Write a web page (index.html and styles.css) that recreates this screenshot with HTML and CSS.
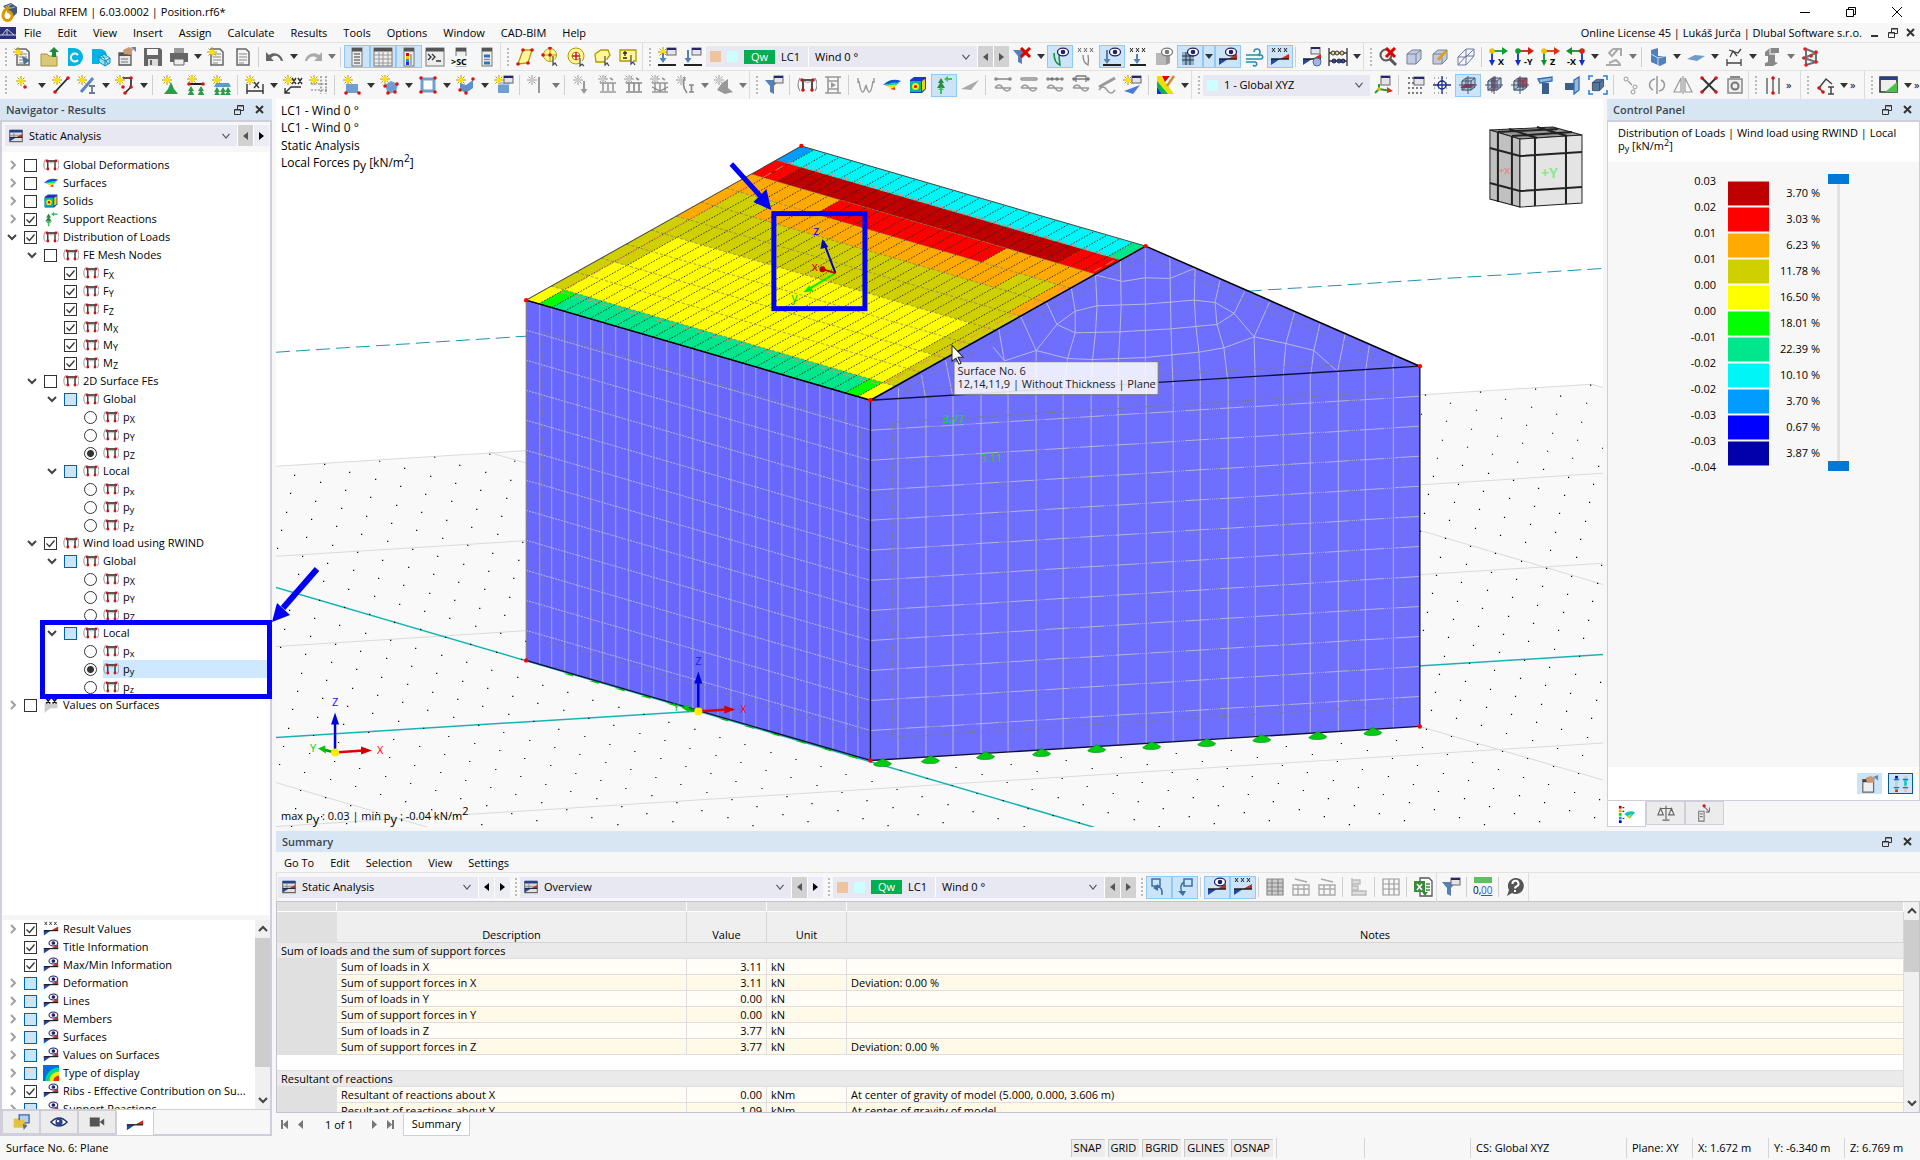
FILE: index.html
```html
<!DOCTYPE html>
<html lang="en">
<head>
<meta charset="utf-8">
<title>Dlubal RFEM | 6.03.0002 | Position.rf6*</title>
<link rel="stylesheet" href="styles.css">
</head>
<body>
<header class="titlebar">
  <svg class="logo" viewBox="0 0 18 20"><path d="M3 4l8-3 6 4v6l-4 4z" fill="#3f5a78"/><path d="M5 5l7-3M7 7l8-2" stroke="#9fb4c8"/><path d="M10 5C5 7 3 10 3 14a4.500 4.500 0 1 0 4-4.500" fill="none" stroke="#d99a00" stroke-width="3"/></svg>
  <h1 class="title">Dlubal RFEM | 6.03.0002 | Position.rf6*</h1>
  <div class="winbtns">
    <button aria-label="Minimize"><svg viewBox="0 0 12 12"><path d="M1 6.500h10"/></svg></button>
    <button aria-label="Restore"><svg viewBox="0 0 12 12"><path d="M1.500 3.500h7v7h-7zM3.500 3.500v-2h7v7h-2"/></svg></button>
    <button aria-label="Close"><svg viewBox="0 0 12 12"><path d="M1 1l10 10M11 1L1 11"/></svg></button>
  </div>
</header>
<nav class="menubar">
  <svg class="docicon" viewBox="0 0 16 12"><path d="M0 0h16v12H0z" fill="#2b3078"/><path d="M0 8h16M2 8l5-6 7 6M7 2v6" stroke="#c8cdf0" fill="none"/></svg>
  <button>File</button><button>Edit</button><button>View</button><button>Insert</button><button>Assign</button><button>Calculate</button><button>Results</button><button>Tools</button><button>Options</button><button>Window</button><button>CAD-BIM</button><button>Help</button>
  <span class="license">Online License 45 | Lukáš Jurča | Dlubal Software s.r.o.</span>
  <span class="mdi">
    <button aria-label="Minimize document"><svg viewBox="0 0 10 10"><path d="M1 8h7" stroke-width="2"/></svg></button>
    <button aria-label="Restore document"><svg viewBox="0 0 10 10"><path d="M.5 4.500h6v5h-6zM3.500 4v-3.500h6v5H7M.5 5h6M3.500 1h6"/></svg></button>
    <button aria-label="Close document"><svg viewBox="0 0 10 10"><path d="M1 1l7 7M8 1L1 8" stroke-width="2"/></svg></button>
  </span>
</nav>
<div class="toolbar" id="tools-main" role="toolbar" aria-label="Main tools"></div>
<div class="toolbar" id="tools-model" role="toolbar" aria-label="Model tools"></div>

<main class="workspace">
  <aside class="navigator">
    <div class="panelhead"><h2>Navigator - Results</h2><span class="panelbtns"></span></div>
    <div class="navbody">
      <div class="navcombo">
        <button class="combo grow"><span data-icon="analysis"></span><span class="combotext">Static Analysis</span><span data-icon="down"></span></button>
        <button class="step off" aria-label="Previous analysis"><i class="tri left"></i></button><button class="step" aria-label="Next analysis"><i class="tri right"></i></button>
      </div>
      <div class="tree grow" id="tree"></div>
      <div class="tree options"><div class="optlist grow" id="options"></div>
        <div class="scroll"><svg viewBox="0 0 15 18"><path d="M4 11l4-4 4 4"/></svg><i class="thumb"></i><svg viewBox="0 0 15 18"><path d="M4 7l4 4 4-4"/></svg></div>
      </div>
    </div>
    <div class="tabs" id="navtabs"></div>
  </aside>

  <section class="viewport">
    <svg id="scene" viewBox="276 99 1326 729" preserveAspectRatio="xMinYMin slice" role="img" aria-label="Wind load on the roof surface"></svg>
  </section>

  <aside class="control">
    <div class="panelhead"><h2>Control Panel</h2><span class="panelbtns"></span></div>
    <div class="ctlbody">
      <p class="ctltitle">Distribution of Loads | Wind load using RWIND | Local<br>p<sub>y</sub> [kN/m<sup>2</sup>]</p>
      <div class="legend">
        <ul class="values" id="values"></ul>
        <ul class="swatches" id="swatches"></ul>
        <ul class="shares" id="shares"></ul>
        <div class="rail"><input type="range" aria-label="Upper limit" value="0"><input type="range" aria-label="Lower limit" value="100"></div>
      </div>
      <div class="ctlfoot"><button aria-label="Panel options"><span data-icon="palette"></span></button><button class="active" aria-label="Show limits"><span data-icon="limits"></span></button></div>
    </div>
    <div class="tabs" id="ctltabs"></div>
  </aside>

  <section class="summary">
    <div class="panelhead"><h2>Summary</h2><span class="panelbtns"></span></div>
    <nav class="submenu"><button>Go To</button><button>Edit</button><button>Selection</button><button>View</button><button>Settings</button></nav>
    <div class="toolbar" id="tools-summary" role="toolbar" aria-label="Table tools"></div>
    <div class="tablewrap">
      <div class="tableclip grow">
      <table>
        <colgroup><col class="c-no"><col class="c-desc"><col class="c-val"><col class="c-unit"><col></colgroup>
        <thead>
          <tr class="strip"><td></td><td></td><td></td><td></td><td></td></tr>
          <tr class="heads"><td class="no"></td><th>Description</th><th>Value</th><th>Unit</th><th>Notes</th></tr>
        </thead>
        <tbody id="rows"></tbody>
      </table>
      </div>
      <div class="scroll"><svg viewBox="0 0 15 18"><path d="M4 11l4-4 4 4"/></svg><i class="thumb short"></i><svg viewBox="0 0 15 18"><path d="M4 7l4 4 4-4"/></svg></div>
    </div>
    <div class="pager">
      <button aria-label="First"><svg viewBox="0 0 9 9"><path d="M1 0h2v9H1zM8 0v9L3 4.500z"/></svg></button>
      <button aria-label="Previous"><svg viewBox="0 0 9 9"><path d="M6 0v9L1 4.500z"/></svg></button>
      <span>1 of 1</span>
      <button aria-label="Next"><svg viewBox="0 0 9 9"><path d="M3 0v9l5-4.500z"/></svg></button>
      <button aria-label="Last"><svg viewBox="0 0 9 9"><path d="M6 0h2v9H6zM1 0v9l5-4.500z"/></svg></button>
      <button class="sheet">Summary</button>
    </div>
  </section>
</main>

<footer class="status">
  <span class="grow">Surface No. 6: Plane</span>
  <button>SNAP</button><button>GRID</button><button>BGRID</button><button>GLINES</button><button>OSNAP</button>
  <span class="cell w88"></span><span class="cell w106"></span><span class="cell w156">CS: Global XYZ</span><span class="cell w66">Plane: XY</span><span class="cell w76">X: 1.672 m</span><span class="cell w76">Y: -6.340 m</span><span class="cell w76">Z: 6.769 m</span>
</footer>
<script src="app.js"></script>
</body>
</html>
```
FILE: styles.css
```css
* { box-sizing: border-box; }
body { margin: 0; height: 100vh; display: flex; flex-direction: column; overflow: hidden; background: #f7f7f7; color: #000; font: 11px/16px "Open Sans", "Noto Sans", sans-serif; }
button { font: inherit; color: inherit; background: none; border: 0; padding: 0; margin: 0; }
svg { display: block; }
h1, h2, p, ul { margin: 0; padding: 0; list-style: none; font-size: 11px; font-weight: 400; }
.grow { flex: 1; min-width: 0; }

.titlebar { display: flex; align-items: center; height: 23px; flex: none; background: #fff; }
.logo { width: 18px; height: 20px; margin-right: 5px; }
.title { flex: 1; line-height: 20px; }
.winbtns { display: flex; }
.winbtns button { width: 46px; height: 20px; display: grid; place-items: center; }
.winbtns svg { width: 12px; height: 12px; fill: none; stroke: #000; }

.menubar { display: flex; align-items: center; height: 20px; flex: none; border-bottom: 1px solid #e2e2e2; }
.docicon { width: 16px; height: 12px; }
.menubar > button { padding: 0 8px; }
.license { margin-left: auto; }
.mdi { display: flex; gap: 8px; padding: 0 4px 0 8px; }
.mdi svg, .panelbtns svg { width: 10px; height: 10px; fill: none; stroke: #333; }

.toolbar { --sep: 6px; display: flex; align-items: center; height: 28px; flex: none; overflow: hidden; }
#tools-main { border-bottom: 1px solid #e2e2e2; }
#tools-model { --sep: 7px; }
.tb { width: 26px; height: 23px; flex: none; display: grid; place-items: center; }
.tb.on { background: #cce4f7; box-shadow: inset 0 0 0 1px #90c8f6; }
.tb svg { width: 20px; height: 20px; }
.dd { width: 12px; height: 23px; flex: none; display: grid; place-items: center; }
.dd::after { content: ""; border: 4px solid transparent; border-top: 5px solid #333; border-bottom: 0; }
.dd.off::after { border-top-color: #777; }
.dd.on { background: #cce4f7; box-shadow: inset 0 0 0 1px #90c8f6; }
.sep { width: var(--sep); flex: none; height: 20px; background: linear-gradient(#d0d0d0, #d0d0d0) 2px 0 / 1px 100% no-repeat; }
.grip { width: 10px; flex: none; height: 20px; background: radial-gradient(circle, #bbb 1px, transparent 1px) 2px 0 / 8px 4px repeat-y; }
.edge { width: 2px; height: 28px; flex: none; border-left: 1px solid #dcdcdc; }
.more { width: 14px; flex: none; }

.combo { display: flex; align-items: center; gap: 6px; height: 21px; padding: 0 4px; flex: none; background: #e8e8f3; text-align: left; }
.combo.grow { flex: 1; }
.combo svg { width: 14px; height: 14px; }
.combotext { flex: 1; }
.combo .chip { width: 11px; height: 11px; }
.chip.sand { background: #efc3a0; }
.chip.ice { background: #ccffff; }
.combo .qw { background: #00b050; color: #fff; padding: 0 7px; line-height: 14px; height: 14px; }
.combo .lc { padding-right: 8px; border-right: 1px solid #fff; line-height: 20px; }
.w270 { width: 271px; } .w200 { width: 200px; } .w167 { width: 167px; }
.step { width: 16px; height: 21px; flex: none; display: grid; place-items: center; background: #ececf5; box-shadow: inset 1px 0 #fff; }
.step.off { background: #d2d2d2; }
.tri { border: 4px solid transparent; }
.tri.left { border-right: 5px solid #000; border-left: 0; }
.tri.right { border-left: 5px solid #000; border-right: 0; }
.off .tri.left { border-right-color: #555; } .off .tri.right { border-left-color: #555; }

.workspace { flex: 1; min-height: 0; display: grid; grid-template: minmax(0, 1fr) 305px / 272px minmax(0, 1fr) 313px; column-gap: 4px; row-gap: 4px; }
.navigator { grid-row: 1 / 3; display: flex; flex-direction: column; min-height: 0; }
.panelhead { display: flex; align-items: center; justify-content: space-between; height: 21px; flex: none; background: #d8e6f3; padding: 0 7px 0 6px; }
.panelhead h2 { font-weight: 600; color: #3c4650; }
.panelbtns { display: flex; gap: 11px; }
.navbody { flex: 1; min-height: 0; display: flex; flex-direction: column; border: 2px solid #cfcfdc; border-width: 2px 2px 1px; background: #f7f7f7; }
.navcombo { display: flex; padding: 3px 1px 6px 3px; }
.tree { background: #fff; overflow: visible; padding-top: 4px; }
.row { display: flex; align-items: center; height: 18px; padding-left: calc(var(--level) * 20px + 4px); }
.twist { width: 12px; height: 10px; margin-right: 6px; fill: none; stroke: #a0a0a0; stroke-width: 2; }
.twist.open { stroke: #444; }
.row input { appearance: none; width: 13px; height: 13px; margin: 0 6px 0 0; flex: none; border: 1px solid #333; background: #fff; }
.row input[type=radio] { border-radius: 50%; }
.row input[type=radio]:checked { background: radial-gradient(circle, #333 3px, #fff 4px); }
.row input[type=checkbox]:checked { background: #fff url("data:image/svg+xml,%3Csvg xmlns='http://www.w3.org/2000/svg' viewBox='0 0 11 11'%3E%3Cpath d='M1.500 5.500l3 3 5-6' fill='none' stroke='%23333' stroke-width='1.300'/%3E%3C/svg%3E") center / 11px 11px no-repeat; }
.row input.part { border-color: #0063b1; background: #cce4f7; }
.row label { display: flex; align-items: center; gap: 4px; flex: 1; height: 18px; white-space: nowrap; }
.row label svg { width: 16px; height: 16px; }
.row.sel label { background: #cde8ff; }
sub, sup { font-size: 9px; line-height: 0; }
sub { vertical-align: -2px; } sup { vertical-align: 4px; }
.marked { position: relative; }
.marked::after { content: ""; position: absolute; left: 38px; right: -2px; top: -4px; bottom: -3px; border: 5px solid #0000fa; z-index: 2; }
.marked .pointer { position: absolute; left: 100%; top: -60px; width: 52px; height: 60px; z-index: 3; margin-left: 2px; }
.options { flex: none; height: 194px; border-top: 5px solid #f5f5f5; display: flex; padding-top: 0; overflow: hidden; }
.optlist { overflow: hidden; }
.scroll { width: 15px; background: #f0f0f0; display: flex; flex-direction: column; justify-content: space-between; flex: none; }
.scroll svg { width: 15px; height: 18px; fill: none; stroke: #444; stroke-width: 2; }
.thumb { flex: 1; background: #cdcdcd; margin-bottom: 24px; }
.thumb.short { flex: none; height: 52px; margin-bottom: auto; }
.tabs { display: flex; height: 26px; flex: none; }
.navigator .tabs { border: 2px solid #cfcfdc; border-top: 0; }
.tab { width: 38px; height: 24px; display: grid; place-items: center; background: #ececec; border: 1px solid #cfcfdc; }
.tab.on { background: #fff; border-top-color: #fff; height: 26px; }
.tab svg { width: 18px; height: 18px; }
.control .tab { width: 39px; }

.viewport { min-width: 0; overflow: hidden; background: #fff; }
#scene { width: 100%; height: 100%; font: 12px "Open Sans", sans-serif; }
.tip { font-size: 11px; }

.control { display: flex; flex-direction: column; min-width: 0; }
.ctlbody { flex: 1; display: flex; flex-direction: column; border: 1px solid #cfcfdc; border-top-width: 2px; }
.ctltitle { background: #fff; height: 40px; padding: 4px 10px; line-height: 13px; white-space: nowrap; }
.legend { display: flex; flex: 1; padding: 10px 0 0 77px; }
.values { width: 31px; text-align: right; margin-right: 12px; }
.values li, .shares li { height: 26px; line-height: 18px; }
.swatches { width: 41px; margin-top: 9px; }
.swatches li { height: 25px; margin-bottom: 1px; box-shadow: inset 0 1px rgba(255,255,255,.5), inset 0 -1px rgba(255,255,255,.5); }
.shares { width: 51px; text-align: right; margin-top: 12px; }
.rail { position: relative; width: 21px; height: 297px; margin: 2px 0 0 8px; background: linear-gradient(#e2e2e2, #e2e2e2) 9px 0 / 3px 100% no-repeat; }
.rail input { position: absolute; inset: 0; margin: 0; width: 21px; height: 297px; appearance: none; writing-mode: vertical-lr; background: none; }
.rail input::-webkit-slider-thumb { appearance: none; width: 21px; height: 10px; background: #0078d7; }
.ctlfoot { display: flex; justify-content: flex-end; align-items: center; gap: 6px; background: #fff; height: 33px; padding-right: 6px; }
.ctlfoot button { width: 25px; height: 21px; display: grid; place-items: center; background: #cce4f7; }
.ctlfoot button.active { border: 1px solid #005a9e; }
.ctlfoot svg { width: 18px; height: 18px; }

.summary { grid-column: 2 / 4; display: flex; flex-direction: column; min-width: 0; }
.submenu { display: flex; height: 21px; flex: none; align-items: center; border-bottom: 1px solid #e2e2e2; padding-top: 1px; }
.submenu button { padding: 0 8px; }
.tablewrap { flex: 1; min-height: 0; display: flex; border: 1px solid #c4c4d0; background: #fff; }
.tableclip { overflow: hidden; }
table { border-collapse: separate; border-spacing: 0; table-layout: fixed; width: 100%; }
.c-no { width: 60px; } .c-desc { width: 350px; } .c-val { width: 80px; } .c-unit { width: 80px; }
td, th { height: 16px; padding: 0 4px; line-height: 15px; font-weight: 400; border-right: 1px solid #dedede; border-bottom: 1px solid #dedede; white-space: nowrap; overflow: hidden; }
.strip td { background: #e0e0e0; height: 10px; line-height: 8px; border-color: #fff; }
.heads th { height: 31px; vertical-align: bottom; background: #efefef; border-color: #d4d4d4; }
td.no { background: #e0e0e0; border-color: #e0e0e0; }
.group td { background: #eaeaea; }
.odd td { background: #fffdf5; } .even td { background: #fff9e8; }
.odd td.no, .even td.no { background: #e0e0e0; }
td.num { text-align: right; }
.pager { display: flex; align-items: center; height: 23px; flex: none; padding-left: 4px; }
.pager svg { width: 9px; height: 9px; fill: #777; margin-right: 8px; }
.pager span { padding: 0 15px 0 11px; }
.pager .sheet { background: #fff; border: 1px solid #cfcfdc; border-top: 0; height: 22px; padding: 0 8px; }

.status { display: flex; align-items: center; height: 24px; flex: none; padding-left: 6px; }
.status button { height: 18px; margin-right: 3px; padding: 0 3px; background: #ececec; box-shadow: inset 1px 1px #c8c8c8; }
.cell { height: 20px; line-height: 20px; padding-left: 5px; border-left: 1px solid #d4d4d4; flex: none; }
.w88 { width: 88px; } .w106 { width: 106px; } .w156 { width: 156px; } .w66 { width: 66px; } .w76 { width: 76px; }
```
FILE: app.js
```js
/* ---------- icon parts ---------- */
const p = (d, s = '#333', w = 1.3, f = 'none') => `<path d="${d}" fill="${f}" stroke="${s}" stroke-width="${w}"/>`;
const fl = (d, f) => `<path d="${d}" fill="${f}"/>`;
const dots = (c, ...a) => a.map(([x, y]) => `<circle cx="${x}" cy="${y}" r="1.800" fill="${c}"/>`).join('');
const star = (x = 5, y = 5, c = '#ffe000') => `<g transform="translate(${x} ${y})">${p('M0-5V5M-5 0H5M-3.500-3.500L3.500 3.500M-3.500 3.500L3.500-3.500', c === '#ffe000' ? '#b09a10' : '#999', 1)}${`<circle r="2.600" fill="${c}"/>`}</g>`;
const eye = (c = '#20206a') => `<ellipse cx="13" cy="5" rx="5.500" ry="3.800" fill="#fff" stroke="${c}" stroke-width="1.300"/><circle cx="13" cy="5" r="2.300" fill="${c}"/>`;
const win = (x, y, w = 9, h = 7) => `<rect x="${x}" y="${y}" width="${w}" height="${h}" fill="#e4e4ea" stroke="#666"/><path d="M${x} ${y}h${w}v2h-${w}z" fill="#27276f"/>`;
const down = (x, y, h, c = '#5580b8') => fl(`M${x - 1} ${y}h2v${h - 4}h2.500l-3.500 5-3.500-5h2.500z`, c);
const xxx = (c = '#222') => p('M2 1l3 4M5 1L2 5M8 1l3 4M11 1L8 5M14 1l3 4M17 1l-3 4', c, 1);
const wedge = fl('M1 18v-6h9z', '#1f48a8') + fl('M10 12l9-5v5z', '#d02818') + p('M1 12h18', '#222', 1.5);
const beam = (c, ...d) => p('M3 4h14', c, 1.5) + dots(c, [3, 4], [17, 4]) + p('M2 13h16M2 13q4-6 8 0t8 0', '#999', 1.4) + d.join('');
const page = (w = '#666') => p('M4 2h9l3 3v13H4z', w, 1.5, '#f4f4f4') + p('M6 7h8M6 10h8M6 13h8M6 16h5', '#888', 1);
const panel = (x, w, inner) => `<rect x="${x}" y="1" width="${w}" height="18" fill="#eee" stroke="#777"/><path d="M${x} 1h${w}v3.500h-${w}z" fill="#555"/>` + inner;
const cube = (f, s) => p('M3 7l5-4h9v9l-5 5H3z', s, 1, f) + p('M3 7h9v10M12 7l5-4', s, 1);
const iso = (pl) => fl('M3 7l5-4h9v9l-4 4H3z', '#b5c6d8') + pl + p('M4 6h9v9H4zM8 3h9v9H8zM4 6l4-3M13 6l4-3M13 15l4-3M4 15l4-3M1 10h18M10 1v18', '#3c5670', 1);
const axes = (a, b, x, y, t) => p(`M${x} 4H${x === 4 ? 16 : 5}`, a, 1.8) + fl(x === 4 ? 'M14 0l6 4-6 4z' : 'M6 0L0 4l6 4z', a) + p(`M${x} 4v11`, b, 1.8) + fl(`M${x - 3} 13h6l-3 6z`, b) + `<circle cx="${x}" cy="4" r="2.800" fill="${y}"/><text x="${x === 4 ? 10 : 1}" y="18" font-size="9" font-weight="700">${t}</text>`;
const funnel = (y = 5) => fl(`M1 ${y}h14l-5 6v8l-4-2v-6z`, '#5580b8');
const tree = (x, y, c) => fl(`M${x} ${y - 4}l3 5h-2l3 5h-8l3-5h-2z`, c);
const load = (c) => p('M2 8h16M5 8v8M10 8v8M15 8v8M2 17h16M6 2l2 2M12 3l3 2', c, 1.6) + star(5, 4, '#ccc');

const I = {
  newfile: page() + star() + fl('M9 9l8 4-6 5z', '#49729c'),
  open: fl('M2 7h6l2 2h8v10H2z', '#d9c877') + p('M2 7h6l2 2h8v10H2z', '#a8953e', 1) + fl('M15 0l5 5h-3v5h-4V5h-3z', '#1d8a3c'),
  cloud: fl('M3 1h6a9 9 0 0 1 9 9 9 9 0 0 1-9 9H3z', '#00b4e4') + p('M13 8a4 4 0 1 0 0 5', '#fff', 2),
  cloudnet: fl('M1 2h8a7 7 0 0 1 7 7v2H8v6H1z', '#00b4e4') + p('M8 10l5-3 6 4v5l-5 3-6-4zM8 10l6 4 5-3M14 14v5M11 8l6 9', '#008fc0', 1, '#9be0f5'),
  hand: p('M2 6h12v12H2z', '#555', 1.3, '#e8e8e8') + fl('M2 6h12v3H2z', '#555') + fl('M6 3l6-3 4 2-2 6-7-1z', '#c99a72') + fl('M14 0h5v5z', '#5b88c0') + p('M4 12h7M4 15h7', '#999'),
  save: fl('M1 1h16l2 2v16H1z', '#666') + fl('M4 2h11v6H4z', '#f4f4f4') + fl('M5 12h10v7H5z', '#ddd') + fl('M7 13h2v5H7z', '#666'),
  print: fl('M5 1h10v5H5z', '#999') + fl('M1 6h18v9H1z', '#666') + p('M5 12h10v6H5z', '#666', 1, '#eee'),
  report: page() + star(), doc: page(),
  undo: fl('M1 5v9h8l-3-3c4-4 8-2 10 3h2C17 7 9 4 4 8z', '#666'), redo: fl('M19 5v9h-8l3-3C10 8 6 10 4 14H2C3 7 11 4 16 8z', '#aaa'),
  p1: panel(5, 10, p('M7 7h6M7 10h6M7 13h6M7 16h6', '#777', 1.5)),
  p2: panel(1, 18, p('M1 8h18M1 12h18M1 16h18M6 5v14M10 5v14M15 5v14', '#999', 1)),
  p3: panel(5, 10, fl('M7 6h3v3H7z', '#e00000') + fl('M7 9h3v3H7z', '#e8d000') + fl('M7 12h3v3H7z', '#00b0a0') + fl('M7 15h3v3H7z', '#1030d0') + p('M12 7v11', '#888')),
  p4: panel(1, 18, p('M3 7l3 3-3 3M7 7l3 3-3 3M11 14h5', '#333')),
  p5: panel(5, 10, '') + `<rect y="9" width="20" height="10" fill="#f6f6f6"/><text x="0" y="18" font-size="9" font-weight="700">&gt;SC</text>`,
  p6: panel(5, 10, p('M7 9h6M7 16h6', '#3070c0', 3) + p('M7 12.500h6', '#888')),
  poly: p('M3 17L8 3h9l-4 13z', '#b39a00', 1.3, '#fff69a') + dots('#e01010', [3, 17], [8, 3], [17, 3], [13, 16]),
  circ: `<circle cx="9" cy="8" r="6.500" fill="#fff69a" stroke="#b39a00"/>` + p('M9 2v12M2 8h13', '#b39a00', 1) + dots('#e01010', [9, 8], [2, 8], [9, 1]) + p('M12 9v9l2-2 2 3', '#444', 1.2, '#fff'),
  circ2: `<circle cx="9" cy="9" r="8" fill="#fff69a" stroke="#b39a00"/><circle cx="9" cy="9" r="4" fill="#fff" stroke="#b39a00"/>` + p('M9 5v8M5 9h8', '#e01010', 1.5) + p('M13 11v8l2-2 2 2', '#444', 1.2, '#fff'),
  lasso: p('M2 7l6-4h7l2 5-5 7H3z', '#b39a00', 1.3, '#fff69a') + p('M12 9v9l2-2 2 3', '#444', 1.2, '#fff'),
  calc: p('M1 3h16v11H1z', '#b39a00', 1.3, '#fff69a') + p('M4 6h4M6 4v5M4 11h4', '#222', 1.3) + p('M12 8v9l2-2 2 3', '#444', 1.2, '#fff'),
  lcnew: star(6, 5) + win(10, 1) + down(6, 6, 9) + p('M1 18h18', '#222', 2), lc: win(9, 1) + down(5, 3, 12) + p('M1 18h18', '#222', 2),
  nofilter: funnel(3) + p('M9 1l9 9M18 1L9 10', '#e00000', 3), filter: funnel(5) + win(10, 1),
  ghost: p('M4 6q0 10 6 12q-1-6-1-12', '#149040', 1.6) + eye(), ghostx: xxx('#666') + p('M7 8q0 8 5 10q1-5 0-10', '#888', 1.3),
  loadeye: down(5, 3, 13) + p('M1 18h18', '#222', 2) + eye(), loadx: xxx() + down(9, 7, 9) + p('M2 18h16', '#222', 2),
  solideye: fl('M2 6h10v12H2z', '#b8b8b8') + fl('M12 6l4-2v12l-4 2z', '#999') + eye('#777'),
  grideye: fl('M2 5h12v13H2z', '#8fb1d4') + p('M2 9h12M2 13h12M6 5v13M10 5v13', '#333', 1) + eye(),
  wedgeeye: wedge + eye(), wind: p('M2 8h11a3 3 0 1 0-3-3M2 12h15a2 2 0 1 0-2-3M2 15h9a2 2 0 1 1-2 3', '#2a8fa8', 1.6), wedgex: wedge + xxx(),
  wedgewin: wedge + win(9, 0) + `<circle cx="15" cy="15" r="4" fill="#9fb8e0" stroke="#4a6cb0"/>`,
  abacus: p('M1 1v18M19 1v18M1 6h18M1 14h18', '#333', 1.3) + `<g stroke="#333" fill="#e8d68a"><circle cx="5" cy="6" r="2"/><circle cx="9" cy="6" r="2"/><circle cx="14" cy="6" r="2"/></g><g stroke="#222" fill="#3048c0"><circle cx="6" cy="14" r="2"/><circle cx="11" cy="14" r="2"/><circle cx="15" cy="14" r="2"/></g>`,
  zoomx: `<circle cx="8" cy="8" r="5.500" fill="#eee" stroke="#555" stroke-width="2"/>` + p('M12 12l6 6', '#555', 3) + p('M8 1l9 9M17 1L8 10', '#e00000', 3),
  cube: cube('#c3cbe0', '#73809c'), cubepen: cube('#c3cbe0', '#73809c') + p('M8 13l8-9', '#e0a020', 3), cubewire: p('M2 10h8v8H2zM10 2h8v7h-8zM2 10l8-8M10 10l8-8M10 18l8-9M2 18l8-9', '#6878a0', 1),
  ax: axes('#10a030', '#1030c8', 4, '#f0c000', 'X'), ay: axes('#d02010', '#1030c8', 4, '#10a030', '-Y'), az: axes('#e03010', '#109030', 4, '#f0c000', 'Z'), amx: axes('#109030', '#1030c8', 16, '#e02010', '-X'),
  scope: p('M2 18h15M5 16l7-3 4 4M9 2h8v7M9 2l-4 4 3 3 6-7', '#aaa', 2),
  block: fl('M3 3l7-2v8h8v7l-6 3-9-4z', '#4f82bd') + p('M3 7l7 4v7M10 11l8-2', '#c7dcf0', 1), plate: fl('M1 12l8-4 10 1-8 5z', '#6d9bcb'),
  dim: p('M3 12v7M17 12v7M3 16h14M6 10l3-6 4 5M5 3l9 3 3-4', '#444', 1.3), steel: fl('M3 5l5-4h9v5h-4v9l3 1-5 3H3v-3l3-1V9H3z', '#888') + p('M8 1v6h5', '#ddd'),
  mesh3: p('M6 2l10 4-12 5 12 4-10 3M6 2v16M16 6v9', '#6a7078', 2) + dots('#e02020', [5, 2], [16, 5], [4, 11], [16, 15], [6, 18], [11, 9]),
  node: star(8, 6) + dots('#e01010', [12, 12]), line: star(6, 5) + p('M4 17L17 3', '#222', 1.8) + dots('#e01010', [4, 17], [17, 3]),
  member: star(5, 5) + p('M4 17L16 3', '#5a86c0', 3) + p('M12 11h6M12 18h6M15 11v7', '#6a7b94', 1.8), members: star(5, 5) + p('M8 3h8v9l-6 6', '#222', 1.6) + dots('#e01010', [16, 3], [8, 12], [10, 18], [16, 12]),
  sup1: star(7, 5) + fl('M11 7l-3 7-4 5h14l-4-5z', '#2d9b47'), sup2: star(6, 4) + p('M3 9h14', '#222', 2) + tree(5, 15, '#2d9b47') + tree(15, 15, '#2d9b47') + dots('#e01010', [3, 9], [17, 9]),
  sup3: star(5, 5) + fl('M4 8h13l2 4H2z', '#5d9cc8') + tree(5, 16, '#2d9b47') + tree(11, 16, '#2d9b47') + tree(16, 16, '#2d9b47'),
  dimx: star(5, 5) + p('M2 9v10M18 9v10M2 16h16M9 7l5 6M14 7l-5 6', '#333', 1.4), xx: star(5, 5) + p('M9 3l4 6M13 3L9 9M15 3l4 6M19 3l-4 6M18 12H8l-6 6M2 13v5h5', '#333', 1.4),
  gridst: star(5, 5) + p('M12 1v18M2 15h17M17 1v18M2 9h17', '#777', 1.2).replace('/>', ' stroke-dasharray="2 1.500"/>'),
  surf: star(6, 5) + fl('M4 9h12v9H4z', '#6f9fd0') + dots('#e01010', [4, 18], [17, 18]), surf2: star(5, 4) + fl('M5 10l6-4 7 3-2 8-8 2z', '#6f9fd0') + dots('#e01010', [5, 11], [17, 9], [8, 18], [15, 17]),
  opening: p('M4 4h12v12H4z', '#6f9fd0', 3, '#fff') + dots('#e01010', [3, 3], [17, 3], [3, 17], [17, 17]), solid: star(5, 5) + fl('M4 8l6 2v8l-6-3zM10 10l7-5v8l-7 5z', '#5d92c8') + dots('#e01010', [10, 18], [17, 4], [4, 15]),
  solid2: star(5, 5) + fl('M4 10h11v8H4z', '#6f9fd0') + fl('M4 10l3-3h11l-3 3z', '#a8c6e6') + win(10, 1),
  l1: star(5, 5, '#ccc') + p('M12 2v16', '#999', 2), l2: star(6, 5, '#ccc') + down(12, 6, 12, '#999'), l3: load('#999'), l4: load('#888'), l5: load('#999') + p('M2 12l8 4 8-4', '#888'), l6: star(5, 5, '#ccc') + p('M9 2q-4 8 2 16M13 10h5M13 17h5M15.500 10v7', '#888', 1.6), l7: star(5, 5, '#ccc') + fl('M8 8l6-4v9l5 4-8 2-8-4z', '#999'),
  frame: p('M6 15V5h9v10', '#222', 1.6) + p('M3 3q-4 7 0 13M18 3q4 7 0 13', '#888', 1.1) + p('M6 6q5 3 9 0', '#999', 1) + dots('#c01818', [5, 5], [16, 5], [6, 15], [15, 15]),
  film: p('M2 2h16M2 18h16M5 2v16M15 2v16M5 6h10v8H5z', '#999', 1.6) + fl('M8 7v6l5-3z', '#999'),
  curve: p('M2 3v5M18 3v5M3 6q3 20 7 4q4 16 7-4', '#999', 1.4), surfres: fl('M1 10Q9 2 19 6l-5 3Q6 9 1 10z', '#1050e0') + fl('M3 11Q9 6 17 8l-4 3q-5-1-10 0z', '#00d8a0') + fl('M5 12q5-3 10-2l-4 3z', '#f0e000') + fl('M8 14l5-2v3z', '#e84000'),
  solidres: fl('M2 5l4-3h12v12l-4 4H2z', '#1838c8') + fl('M2 6h11v11H2z', '#00b8a0') + `<circle cx="7.500" cy="11.500" r="3.500" fill="#ffe800"/><circle cx="7.500" cy="11.500" r="1.500" fill="#e00000"/><path d="M14 6l3-2v10l-3 2z" fill="#e8d800"/>`,
  supres: tree(7, 7, '#2d8a45') + fl('M18 3h-4V1l-4 3 4 3V5h4z', '#3fc060') + fl('M7 12l3 3H8v4H6v-4H4z', '#3fc060'), plane: fl('M1 14L19 5l-8 10z', '#aaa'),
  b1: beam('#888'), b2: beam('#999', p('M3 4h14', '#aaa', 4)), b3: beam('#888', dots('#777', [7, 4], [12, 4])), b4: beam('#777', p('M5 1h10M5 1v6M15 1v6', '#777')), b5: p('M2 12L18 3', '#999', 3) + p('M2 15q4-6 8 0t8 0', '#999', 1.4), b6: star(5, 5) + win(9, 1) + fl('M1 16l16-6-7 9z', '#4c78e0'),
  rainbow: `<rect x="1" y="1" width="17" height="18" fill="#fff"/>` + fl('M1 1h4l13 18h-6L1 6z', '#e8e000') + fl('M1 6l11 13H6L1 12z', '#10b050') + fl('M1 12l5 7H1z', '#1030d0') + fl('M6 1h8l-5 6z', '#e00000') + p('M11 11l7-10', '#d88830', 2.6),
  csys: win(8, 1, 9, 9) + p('M6 14V9M6 14l12 2M6 14l-4 4', '#20a040', 2) + dots('#f0c000', [6, 14]) + fl('M14 12l6 4-6 2z', '#e03010'),
  gridwin: p('M2 3h16M2 8h16M2 13h16M2 18h16', '#555', 1.3).replace('/>', ' stroke-dasharray="2 2"/>') + win(8, 2, 10, 8), gridsnap: p('M2 3h16M2 8h16M2 13h16M2 18h16', '#666', 1).replace('/>', ' stroke-dasharray="1 3"/>') + `<circle cx="10" cy="10" r="4" fill="#fff" stroke="#1a2a90" stroke-width="1.500"/>` + p('M10 1v18M1 10h18', '#1a2a90', 1.3),
  i1: iso(fl('M2 13l5-4h11l-6 4z', '#d02030')), i2: iso(fl('M7 4l5-3v13l-5 4z', '#d02030aa')), i3: iso(fl('M8 3h9v9H8z', '#d02030cc')), i4: fl('M6 8h7v11H6z', '#3a5f88') + p('M2 4l14-2v4l-12 2z', '#2b6cc0', 1.3, '#9db8d2'), i5: fl('M3 8h9v7H3z', '#3a5f88') + p('M12 5l5-3v13l-5 4z', '#2b6cc0', 1.3, '#9db8d2'), i6: `<g transform="translate(2 2) scale(.8)">${cube('#56779c', '#2c4560')}</g>` + p('M1 5V1h4M19 15v4h-4M1 15v4h4M15 1h4v4', '#2b80d0', 1.6),
  pts: `<g fill="none" stroke="#999"><circle cx="5" cy="4" r="2"/><circle cx="14" cy="12" r="2"/><circle cx="12" cy="17" r="2"/></g>` + p('M7 6l4 4', '#999'), rot: p('M8 4a7 6 0 0 0-2 11M12 16a7 6 0 0 0 2-11M10 1v18', '#999', 1.5), mirror: p('M8 3v14H1zM12 3v14h7zM10 1v18', '#999', 1.2), xred: p('M3 3l14 14M17 3L3 17', '#333', 2) + dots('#e01010', [3, 3], [17, 3], [3, 17], [17, 17]), gear: p('M3 4h14v14H3z', '#888', 1.5, '#eee') + `<circle cx="10" cy="11" r="3.500" fill="none" stroke="#777" stroke-width="2"/>` + p('M5 2h10', '#888', 2),
  guides: p('M4 3v16M10 3v16M16 3v16', '#444', 1.2) + dots('#e01010', [10, 3], [10, 18]), snapm: p('M4 13L11 4l6 5M4 13l4 4M13 12h6M13 19h6M16 12v7', '#444', 1.5) + dots('#e01010', [4, 13], [8, 17]), table: p('M1 2h17v15H1z', '#333', 1.6, '#eee') + fl('M1 2h17v3H1z', '#27408a') + fl('M6 17h12V7z', '#4ec04e'),
  analysis: p('M1 2h18v16H1z', '#666', 1.5, '#e0e0e0') + fl('M1 1h18v4H1z', '#27408a') + p('M1 9h18M7 5v8', '#888') + wedge, down: p('M5 7l5 6 5-6', '#555', 1.6),
  palette: p('M2 5h12v14H2z', '#666', 1.3, '#eee') + fl('M2 5h12v3H2z', '#444') + fl('M5 3l6-2 5 2-2 5-7 1z', '#c99a72') + fl('M14 2l5-2v6z', '#5b88c0'), limits: p('M5 1v18', '#ccc', 3) + p('M15 1v18', '#ccc', 3) + fl('M3.500 1h3v3h-3z', '#000080') + fl('M3.500 16h3v3h-3z', '#d03000') + fl('M13.500 6h3v6h-3z', '#00d8c0') + p('M2 5h6M2 14h6M12 5h6M12 14h6', '#0078d7', 1.6),
  eyebig: `<path d="M1 10Q10 1 19 10Q10 19 1 10z" fill="#fff" stroke="#20306a" stroke-width="1.600"/><circle cx="10" cy="10" r="4" fill="#27408a"/><circle cx="9" cy="9" r="1.300" fill="#fff"/>`, cam: fl('M2 5h11v10H2zM13 10l5-4v8z', '#555'), wedge: wedge, folder: fl('M2 6h6l1 2h7v8H2z', '#e8c040') + p('M8 2h11v9H8z', '#3c66b0', 1.5, '#b8cdea') + fl('M2 8h12v8H2z', '#e8c040') + fl('M12 12l5 2-4 5z', '#5070a0'),
  wedgevals: wedge + xxx(), contour: fl('M0 0h20v20H0z', '#0070e8') + fl('M3 20A17 17 0 0 1 20 3v17z', '#00d890') + fl('M8 20A12 12 0 0 1 20 8v12z', '#e8f000') + fl('M13 20a7 7 0 0 1 7-7v7z', '#e83000'), vxx: fl('M2 8h16v6H9l-7 6z', '#ccc') + p('M4 2l5 6M9 2L4 8M12 2l5 6M17 2l-5 6', '#111', 2),
  scale: fl('M1 1h3v3H1z', '#c00000') + fl('M1 5h3v3H1z', '#ffa000') + fl('M1 9h3v3H1z', '#00e000') + fl('M1 13h3v3H1z', '#00a0f0') + fl('M1 17h3v3H1z', '#0000a0') + fl('M7 10q5-5 12-2l-6 7z', '#00c8c0') + fl('M10 12l6-2-4 5z', '#f0d000') + p('M5 3h2M5 7h2M5 15h2', '#333'), balance: p('M10 2v15M6 18h8M3 5h14M4 5l-3 7h6zM16 5l-3 7h6z', '#666', 1.3), pick: p('M3 8h6v11H3zM4.500 11h3M4.500 14h3M9 3l6 6M15 9V4M15 9h-4', '#777', 1.2) + dots('#e01010', [9, 2]),
  sync1: p('M3 2h8v7H3zM13 18q1-9-6-8', '#3c6ea8', 1.5) + fl('M9 7v7l-5-3z', '#3c6ea8'), sync2: p('M9 2h8v7H9zM9 5q-5 3-2 11', '#3c6ea8', 1.5) + fl('M3 14h8l-3 5z', '#3c6ea8'),
  t1: p('M2 2h16v16H2zM2 6h16M2 10h16M2 14h16M7 2v16M13 2v16', '#888', 1.2, '#ccc'), t2: p('M2 8h16v10H2zM2 12h16M7 8v10M13 8v10M4 2l12 3', '#aaa', 1.4), t3: p('M3 1v18M3 3h8v4H3M3 9h6v4H3M3 14h14v4H3', '#bbb', 1.4, '#ddd'), t4: p('M2 2h16v16H2zM2 7h16M2 12h16M8 2v16M13 2v16', '#999', 1.2), excel: p('M7 1h9l3 3v15H7z', '#555', 1.3, '#fff') + fl('M1 4h11v11H1z', '#3a8a3a') + p('M4 7l5 6M9 7l-5 6', '#fff', 1.5) + p('M13 7h4M13 10h4M13 13h4', '#3a8a3a') + fl('M9 15h6l-3 4z', '#3a8a3a'),
  num: fl('M1 0h18v6H1z', '#5fc05f') + `<text x="0" y="17" font-size="10">0,</text><text x="8" y="17" font-size="10" fill="#2858d8" text-decoration="underline">00</text>`, help: fl('M10 1a8 8 0 1 1-3 15l-5 3 2-6A8 8 0 0 1 10 1z', '#555') + p('M7.500 7a3 3 0 1 1 4 2.500q-1.500.5-1.500 2M10 13v2', '#fff', 2)
};
const svg = n => `<svg viewBox="0 0 20 20" aria-hidden="true">${I[n]}</svg>`;
document.querySelectorAll('[data-icon]').forEach(e => e.innerHTML = svg(e.dataset.icon));
document.querySelectorAll('.panelbtns').forEach(e => e.innerHTML = '<button aria-label="Float"><svg viewBox="0 0 10 10"><path d="M.5 4.500h6v5h-6zM3.500 4v-3.500h6v5H7M.5 5h6M3.500 1h6"/></svg></button><button aria-label="Close panel"><svg viewBox="0 0 10 10"><path d="M1 1l7 7M8 1L1 8" stroke-width="2"/></svg></button>');

/* ---------- toolbars: "v" drop-down arrow, "|" separator, "#" new group, "*" pressed ---------- */
const arrows = (a, b) => `<button class="step ${a}" aria-label="Previous"><i class="tri left"></i></button><button class="step ${b}" aria-label="Next"><i class="tri right"></i></button>`;
const combos = {
  '@lc': `<button class="combo w270"><i class="chip sand"></i><i class="chip ice"></i><span class="qw">Qw</span><span class="lc">LC1</span><span class="combotext">Wind 0 °</span>${svg('down')}</button>` + arrows('off', 'off'),
  '@cs': `<button class="combo w167"><i class="chip ice"></i><span class="combotext">1 - Global XYZ</span>${svg('down')}</button>`,
  '@an': `<i class="edge"></i><button class="combo w200">${svg('analysis')}<span class="combotext">Static Analysis</span>${svg('down')}</button>` + arrows('', ''),
  '@ov': `<button class="combo w270">${svg('analysis')}<span class="combotext">Overview</span>${svg('down')}</button>` + arrows('off', '')
};
const bar = (id, spec) => document.getElementById(id).innerHTML = spec.trim().split(/\s+/).map(t =>
  combos[t] || (t === 'v' ? '<button class="dd" aria-label="More"></button>' : t === 'v-' ? '<button class="dd off" aria-label="More"></button>' : t === 'v*' ? '<button class="dd on" aria-label="More"></button>' :
  t === '|' ? '<i class="sep"></i>' : t === 'g' ? '<i class="grip"></i>' : t === '#' ? '<i class="edge"></i><i class="grip"></i>' : t === '/' ? '<i class="edge"></i>' : t === '>' ? '<span class="more">»</span>' :
  `<button class="tb${t.endsWith('*') ? ' on' : ''}" aria-label="${t.replace('*', '')}">${svg(t.replace('*', ''))}</button>`)).join('');
bar('tools-main', 'g newfile open cloud cloudnet hand save print v report doc | undo v redo v- | p1* p2* p3* p4 p5 p6 # poly circ circ2 lasso calc # lcnew lc @lc nofilter v ghost* ghostx loadeye* loadx solideye grideye* v* wedgeeye* wind wedgex* | wedgewin abacus v # zoomx cube cubepen cubewire | ax ay az amx v scope v- | block v plate v dim v steel v- mesh3');
bar('tools-model', 'g node v line member v members v | sup1 sup2 sup3 | dimx v xx gridst | surf v surf2 v opening v solid v solid2 | l1 v- | l2 l3 l4 l5 l6 v- l7 v- # filter | frame film | curve surfres solidres supres* plane | b1 b2 b3 b4 b5 b6 | rainbow v # @cs csys | gridwin gridsnap i1* i2 i3 i4 i5 i6 | pts rot mirror xred gear # guides > # snapm v > # table v >');
bar('tools-summary', '@an g @ov g @lc g sync1* sync2* | wedgeeye* wedgex* | t1 t2 t2 | t3 | t4 | excel / filter | num | help /');
const tabs = (id, on, ...n) => document.getElementById(id).innerHTML = n.map(k => `<button class="tab${k === on ? ' on' : ''}" aria-label="${k}">${svg(k)}</button>`).join('');
tabs('navtabs', 'wedge', 'folder', 'eyebig', 'cam', 'wedge');
tabs('ctltabs', 'scale', 'scale', 'balance', 'pick');

/* ---------- navigator rows: level, twist, state, icon, text ---------- */
I.wedgeview = wedge + eye();
let uid = 0;
const row = ([lv, tw, st, ic, tx, sel], grp) => {
  const id = 'n' + uid++, radio = st[0] === 'r';
  const t = tw === '>' ? '<svg class="twist" viewBox="0 0 12 10"><path d="M5 1l4 4-4 4"/></svg>' : tw === 'v' ? '<svg class="twist open" viewBox="0 0 12 10"><path d="M2 3l4 4 4-4"/></svg>' : '<span class="twist"></span>';
  return `<div class="row${sel ? ' sel' : ''}" style="--level:${lv}">${t}<input id="${id}" type="${radio ? 'radio' : 'checkbox'}"${radio ? ` name="${grp}"` : ''}${st.endsWith('1') ? ' checked' : ''}${st === 'p' ? ' class="part"' : ''}><label for="${id}">${svg(ic)}<span>${tx}</span></label></div>`;
};
const comps = (grp, xyz, on, sel) => xyz.map((c, i) => row([3, '', i === on ? 'r1' : 'r0', 'frame', `p<sub>${c}</sub>`, sel && i === on], grp)).join('');
const U = ['X', 'Y', 'Z'], L = ['x', 'y', 'z'];
document.getElementById('tree').innerHTML =
  [[0, '>', 'c0', 'frame', 'Global Deformations'], [0, '>', 'c0', 'surfres', 'Surfaces'], [0, '>', 'c0', 'solidres', 'Solids'], [0, '>', 'c1', 'supres', 'Support Reactions'], [0, 'v', 'c1', 'frame', 'Distribution of Loads'], [1, 'v', 'c0', 'frame', 'FE Mesh Nodes'],
   ...['F', 'M'].flatMap(f => U.map(c => [2, '', 'c1', 'frame', `${f}<sub>${c}</sub>`])), [1, 'v', 'c0', 'frame', '2D Surface FEs'], [2, 'v', 'p', 'frame', 'Global']].map(r => row(r)).join('') +
  comps('fg', U, 2) + row([2, 'v', 'p', 'frame', 'Local']) + comps('fl', L, -1) + row([1, 'v', 'c1', 'frame', 'Wind load using RWIND']) + row([2, 'v', 'p', 'frame', 'Global']) + comps('wg', U, -1) +
  `<div class="marked">${row([2, 'v', 'p', 'frame', 'Local'])}${comps('wl', L, 1, true)}<svg class="pointer" viewBox="0 0 52 60"><path d="M45 5L11 44" stroke="#0000fa" stroke-width="6"/><path d="M0 58L5 39l13 12z" fill="#0000fa"/></svg></div>` + row([0, '>', 'c0', 'vxx', 'Values on Surfaces']);
document.getElementById('options').innerHTML = [['>', 'c1', 'wedgevals', 'Result Values'], ['', 'c1', 'wedgeview', 'Title Information'], ['', 'c1', 'wedgeview', 'Max/Min Information'], ['>', 'p', 'wedgeview', 'Deformation'], ['>', 'p', 'wedgeview', 'Lines'], ['>', 'p', 'wedgeview', 'Members'], ['>', 'p', 'wedgeview', 'Surfaces'], ['>', 'p', 'wedgeview', 'Values on Surfaces'], ['>', 'p', 'contour', 'Type of display'], ['>', 'c1', 'wedgeview', 'Ribs - Effective Contribution on Su...'], ['>', 'p', 'wedgeview', 'Support Reactions']].map(r => row([0, ...r])).join('');

/* ---------- legend ---------- */
const C = ['#be0000', '#ff0000', '#ffaa00', '#d0d000', '#ffff00', '#00ff00', '#00e68c', '#00f6f6', '#009cff', '#0000ff', '#0000aa'];
const li = (id, a, f) => document.getElementById(id).innerHTML = a.map(f).join('');
li('values', ['0.03', '0.02', '0.01', '0.01', '0.00', '0.00', '-0.01', '-0.02', '-0.02', '-0.03', '-0.03', '-0.04'], v => `<li>${v}</li>`);
li('swatches', C, c => `<li style="background:${c}"></li>`);
li('shares', ['3.70', '3.03', '6.23', '11.78', '16.50', '18.01', '22.39', '10.10', '3.70', '0.67', '3.87'], v => `<li>${v} %</li>`);

/* ---------- result table ---------- */
const data = [['Sum of loads and the sum of support forces'], ['Sum of loads in X', '3.11', 'kN', ''], ['Sum of support forces in X', '3.11', 'kN', 'Deviation: 0.00 %'], ['Sum of loads in Y', '0.00', 'kN', ''], ['Sum of support forces in Y', '0.00', 'kN', ''], ['Sum of loads in Z', '3.77', 'kN', ''], ['Sum of support forces in Z', '3.77', 'kN', 'Deviation: 0.00 %'], [], ['Resultant of reactions'], ['Resultant of reactions about X', '0.00', 'kNm', 'At center of gravity of model (5.000, 0.000, 3.606 m)'], ['Resultant of reactions about Y', '-1.09', 'kNm', 'At center of gravity of model']];
li('rows', data, (r, i) => r.length < 2 ? `<tr class="${r.length ? 'group' : ''}"><td colspan="5">${r[0] || ''}</td></tr>` : `<tr class="${i % 2 ? 'odd' : 'even'}"><td class="no"></td><td>${r[0]}</td><td class="num">${r[1]}</td><td>${r[2]}</td><td>${r[3]}</td></tr>`);

/* ---------- model view ---------- */
const out = [];
const ln = (x1, y1, x2, y2, s, x = '') => out.push(`<path d="M${x1.toFixed(1)} ${y1.toFixed(1)}L${x2.toFixed(1)} ${y2.toFixed(1)}" stroke="${s}" fill="none" ${x}/>`);
const poly = (pts, f, s = 'none', x = '') => out.push(`<polygon points="${pts.map(q => q.map(v => v.toFixed(1)).join()).join(' ')}" fill="${f}" stroke="${s}" ${x}/>`);
const text = (x, y, t, f = '#000', x2 = '') => out.push(`<text x="${x}" y="${y}" fill="${f}" ${x2}>${t}</text>`);
poly([[276, 466], [1591, 384], [1700, 416], [1700, 900], [276, 900]], '#f9f9f9');
for (let k = 0; k < 5; k++) if (k !== 3) ln(276, 466 + 90 * k, 1591 + k * 60, 384 + 90 * k - k * 4, '#dadada');
ln(489, 452, 1419, 726, '#dadada'); ln(1419, 726, 1700, 808, '#dadada'); ln(1040, 418, 1700, 613, '#dadada'); ln(1591, 384, 1700, 416, '#dadada'); ln(276, 782, 520, 854, '#dadada');
ln(276, 737, 1700, 648, '#14b4b4', 'stroke-width="1.500"'); ln(276, 587, 1200, 858, '#14b4b4', 'stroke-width="1.500"');
let d = '';
for (let a = -30; a <= 30; a++) for (let b = -30; b < 50; b++) {
  const x = 698 + 55 * a + 25.3 * b, y = 711 - 3.43 * a + 7.43 * b;
  if (x > 276 && x < 1700 && y < 900) d += `M${Math.round(x)} ${Math.round(y)}h1.200`;
}
out.push(`<path d="${d}" stroke="#000" stroke-width="1.200"/>`);
ln(276, 352, 526, 336, '#1e95b5', 'stroke-dasharray="14 6"'); ln(1247, 291, 1700, 262, '#1e95b5', 'stroke-dasharray="14 6"');
const A = [526, 300], B = [870, 400], Cc = [801, 146], D = [1145, 246], E = [1419, 366], F = [1419, 726], G = [870, 760], H = [526, 660];
/* small supports below the left wall */
for (let i = 0; i < 12; i++) if (i !== 5) { const x = 568 + i * 25.800, y = 673 + i * 7.5; poly([[x - 5, y], [x + 4, y], [x + 5, y + 3]], '#00c010'); }
poly([A, B, G, H], '#6868ff'); poly([B, D, E, F, G], '#6e6eff');
const mesh = (x1, y1, x2, y2, x = '') => ln(x1, y1, x2, y2, '#b4b4d2', x);
for (let i = 1; i < 27; i++) { const x = Math.round(526 + i * 12.74) + .5, y = 300 + i * 3.7; mesh(x, y, x, y + 360, 'opacity=".8"'); }
for (let i = 1; i < 12; i++) { mesh(526, 300 + 30 * i, 870, 400 + 30 * i, 'stroke-dasharray="2 1"'); mesh(870, 400 + 30 * i, 1419, 366 + 30 * i, 'stroke-dasharray="24 1 1 1 1 1 1 1 1 1 1 1"'); }
for (let i = 1; i < 20; i++) { const x = Math.round(870 + i * 27.45) + .5, y = 400 - i * 1.7; mesh(x, y, x, y + 360); }
/* gable mesh, traced in its own units */
out.push('<g transform="translate(1000 95) scale(.3827 .3333)" fill="none" stroke="#b8b8d4"><path vector-effect="non-scaling-stroke" d="M248 540L318 559 378 548 442 550 508 519M248 540L252 632 248 712 240 795 236 890M313 498L315 632 312 710 308 790V880M378 453V875M442 487L445 700 450 870M508 519L506 615 510 692 518 772 522 857M120 622L147 688 195 713 312 710 445 701 565 688 610 655 560 622 506 615 378 627 252 632 195 648 147 688M185 580L195 648V713L175 790 165 885M147 688L93 766 10 797-20 755M93 766L175 790 240 793 378 787 518 771 583 758 662 725 745 745 818 766 880 829M53 665L93 766 92 890M-5 700L10 797 18 900M573 555L560 622 565 688 583 758 593 853M637 590L610 655 662 725 665 848M702 622L662 725M768 650L745 745 738 843M834 685L818 766 810 838M900 715L880 829M963 750L953 828M1028 785L1023 823"/></g>');
mesh(898, 388, 898, 399); mesh(921, 375, 925, 397); mesh(945, 360, 952, 395);
const inset = (pts, c) => out.push(`<polygon points="${pts}" fill="none" stroke="${c}" stroke-dasharray="9 5" opacity=".8"/>`);
inset('542,332 860,425 858,732 543,640', '#7d7d9c'); inset('892,422 1399,391 1399,705 892,737', '#7a7a8c'); inset('904,390 1145,256 1384,361', '#7a7a8c');
/* roof cells: column s of 27, row t of 11 */
const at = (s, t) => [526 + 344 * s / 27 + 275 * t / 11, 300 + 100 * s / 27 - 154 * t / 11];
const patch = (c0, c1, r0, r1, c) => poly([at(c0, r0), at(c1, r0), at(c1, r1), at(c0, r1)], C[c]);
patch(0, 27, 0, 11, 3); patch(0, 1, 0, 1, 4); patch(26, 27, 0, 1, 4); patch(1, 2, 0, 1, 5); patch(25, 26, 0, 1, 5); patch(2, 25, 0, 1, 6);
patch(1, 26, 1, 3, 4); patch(2, 25, 3, 5, 4); patch(0, 1, 6, 9, 2); patch(26, 27, 6, 9, 2); patch(4, 23, 7, 8, 2); patch(0, 27, 8, 9, 2); patch(7, 20, 8, 9, 1);
patch(0, 2, 9, 10, 1); patch(2, 24, 9, 10, 0); patch(24, 27, 9, 10, 1); patch(0, 1, 10, 11, 8); patch(1, 26, 10, 11, 7); patch(26, 27, 10, 11, 6);
for (let i = 1; i < 27; i++) ln(...at(i, 0), ...at(i, 11), '#222', 'stroke-dasharray="1.500 1.500" stroke-width=".9"');
for (let i = 1; i < 11; i++) ln(...at(0, i), ...at(27, i), '#777', 'stroke-dasharray="3 2" stroke-width=".7"');
inset('561,292 881,385 1118,258 790,162', '#ff8070');
poly([A, B, D, Cc], 'none', '#444'); ln(...A, ...B, '#000', 'stroke-width="1.500"'); ln(...B, ...D, '#000', 'stroke-width="1.500"'); ln(...D, ...E, '#000', 'stroke-width="1.500"');
[[B, E], [E, F], [F, G], [G, B], [G, H]].forEach(([m, n]) => ln(...m, ...n, '#101030', 'stroke-width="1.300"')); ln(...A, ...H, '#777');
/* supports along the right wall */
for (let i = 0; i < 10; i++) { const x = i ? Math.round(875 + i * 55.2) : 882, y = Math.round(763 - i * 3.4); out.push(`<path d="M${x - 9} ${y + 1}L${x} ${y - 5}l9 5q-1 3-9 3t-9-2z" fill="#00cc14" stroke="#159015" stroke-width=".7"/>`); }
[A, B, Cc, D, E, F, G, H].forEach(([x, y]) => out.push(`<circle cx="${x}" cy="${y}" r="2.200" fill="#f00"/>`));
/* axis triads */
[[335, 752], [698, 711]].forEach(([x, y]) => {
  out.push(`<g transform="translate(${x} ${y})"><path d="M0 0V-30" stroke="#0000d8" stroke-width="2.500"/><path d="M-4-28h8L0-40z" fill="#0000d8"/><path d="M0 0l28-2" stroke="#e00000" stroke-width="2.500"/><path d="M26-6l11 4-11 4z" fill="#d00000"/><path d="M0 0l-12-3" stroke="#00a000" stroke-width="2.500"/><path d="M-10-7l-7 3 8 5z" fill="#00c800"/><circle r="4" fill="#ffec00"/></g>`);
  text(x, y - 46, 'Z', '#2020ff', 'text-anchor="middle" font-size="11"'); text(x + 45, y + 2, 'X', '#f00', 'text-anchor="middle" font-size="11"'); text(x - 22, y, 'Y', '#00d000', 'text-anchor="middle" font-size="11"');
});
out.push('<path d="M835 273L824 244" stroke="#0000c8" stroke-width="2"/><path d="M820 249l2-10 6 8z" fill="#0000c8"/><path d="M835 273L810 288" stroke="#00f000" stroke-width="2"/><path d="M803 292l6-7 4 6z" fill="#00f000"/><path d="M835 273L822 269" stroke="#c00000" stroke-width="2"/><circle cx="822" cy="269" r="3" fill="#c00000"/>');
text(813, 235, 'z', '#0000c8'); text(811, 271, 'x', '#d00000'); text(791, 302, 'y', '#00d000');
text(942, 423, '3.77', '#00e800', 'class="tip"'); text(980, 462, '3.11', '#00e800', 'class="tip"');
/* pointer box and arrow */
out.push('<rect x="773.500" y="213.500" width="91" height="95" fill="none" stroke="#0000fa" stroke-width="5"/><path d="M731 164l30 33" stroke="#0000fa" stroke-width="5"/><path d="M771 210l-18-8 13-13z" fill="#0000fa"/>');
/* view cube */
poly([[1489, 130], [1552, 127], [1581, 135], [1519, 139]], '#9a9a9a', '#222'); poly([[1489, 130], [1519, 139], [1519, 207], [1489, 199]], '#c0c0c0', '#222'); poly([[1519, 139], [1581, 135], [1581, 203], [1519, 207]], '#e4e4e4', '#222');
out.push('<path d="M1489 148l30 8 62-4M1489 183l30 8 62-4M1497 132v70M1511 137v68M1534 138v68M1565 136v68M1497 132l60-3M1511 136l60-4M1508 129l28 9M1536 127l30 9" fill="none" stroke="#222" stroke-width="2"/>');
text(1540, 178, '+Y', '#8ce88c', 'font-size="14" font-weight="700"'); text(1498, 174, '+X', '#e08c8c', 'font-size="9" font-weight="700"');
/* hints */
out.push('<rect x="953.500" y="361.500" width="204" height="33" fill="#fff" fill-opacity=".86" stroke="#777"/>');
text(957, 375, 'Surface No. 6', '#222', 'class="tip"'); text(957, 388, '12,14,11,9 | Without Thickness | Plane', '#222', 'class="tip"');
out.push('<path d="M951.500 345v16l4-3 3 6 2-1-3-6h5z" fill="#fff" stroke="#222"/>');
text(281, 115, 'LC1 - Wind 0 °'); text(281, 132, 'LC1 - Wind 0 °'); text(281, 150, 'Static Analysis'); text(281, 167, 'Local Forces p<tspan dy="3">y</tspan><tspan dy="-3"> [kN/m</tspan><tspan dy="-5" font-size="10">2</tspan><tspan dy="5">]</tspan>');
text(281, 819, 'max p<tspan dy="4" font-size="13">y</tspan><tspan dy="-4"> : 0.03 | min p</tspan><tspan dy="4" font-size="13">y</tspan><tspan dy="-4"> : -0.04 kN/m</tspan><tspan dy="-5">2</tspan>', '#000', 'class="tip"');
document.getElementById('scene').innerHTML = out.join('');
```
